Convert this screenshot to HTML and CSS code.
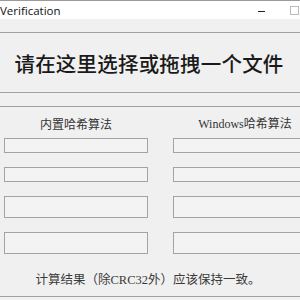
FILE: index.html
```html
<!DOCTYPE html>
<html lang="zh-CN">
<head>
    <meta charset="UTF-8">
    <meta name="viewport" content="width=device-width, initial-scale=1.0">
    <title>Hash Verification</title>
    <link rel="stylesheet" href="styles.css">
</head>
<body>

<div class="window">
    <div class="titlebar">
        <span class="title">Verification</span>
        <span class="min-btn"></span>
        <span class="max-btn"></span>
    </div>

    <div class="drop-zone">请在这里选择或拖拽一个文件</div>

    <div class="panel">
        <div class="columns">
            <div class="column">
                <div class="col-label">内置哈希算法</div>
                <div class="field"></div>
                <div class="field"></div>
                <div class="field tall"></div>
                <div class="field tall"></div>
            </div>
            <div class="column">
                <div class="col-label">Windows哈希算法</div>
                <div class="field"></div>
                <div class="field"></div>
                <div class="field tall"></div>
                <div class="field tall"></div>
            </div>
        </div>
        <p class="note">计算结果（除CRC32外）应该保持一致。</p>
    </div>
</div>

</body>
</html>
```

FILE: styles.css
```css
body {
    margin: 0;
    width: 300px;
    height: 300px;
    overflow: hidden;
    background-color: #f0f0f0;
    font-family: 'Liberation Serif', 'Noto Sans CJK SC', serif;
    color: #2a2a2a;
}

.window {
    width: 300px;
    border-top: 1px solid #9a9a9a;
}

.titlebar {
    height: 18px;
    background-color: #ffffff;
    display: flex;
    align-items: center;
    position: relative;
}

.title {
    font-family: 'Open Sans', 'Noto Sans', sans-serif;
    font-size: 11.5px;
    color: #111;
    margin-left: 0;
}

.min-btn {
    position: absolute;
    left: 258px;
    top: 10px;
    width: 7px;
    height: 1px;
    background-color: #222;
}

.max-btn {
    position: absolute;
    left: 290px;
    top: 5px;
    width: 7px;
    height: 7px;
    border: 1px solid #bbb;
}

.drop-zone {
    margin-top: 13px;
    height: 59px;
    border-top: 1px solid #a0a0a0;
    border-bottom: 1px solid #a0a0a0;
    display: flex;
    align-items: center;
    justify-content: center;
    font-family: 'Noto Sans CJK SC', sans-serif;
    font-size: 20.5px;
    font-weight: 500;
    letter-spacing: 0.2px;
    color: #1a1a1a;
    padding-right: 2px;
}

.panel {
    margin-top: 13px;
    height: 189px;
    border-top: 1px solid #a0a0a0;
    border-bottom: 1px solid #a0a0a0;
}

.columns {
    display: flex;
    gap: 25px;
    padding-left: 4px;
    width: 296px;
    overflow: hidden;
}

.column {
    flex: 0 0 144px;
    display: flex;
    flex-direction: column;
    gap: 14px;
}

.col-label {
    margin-top: 10px;
    margin-bottom: -7px;
    height: 14px;
    line-height: 14px;
    text-align: center;
    font-size: 12px;
    color: #333;
}

.column:first-child .col-label {
    font-family: 'Noto Sans CJK SC', sans-serif;
}

.field {
    height: 13px;
    border: 1px solid #a3a3a3;
    background-color: #f3f3f3;
}

.field.tall {
    height: 20px;
}

.note {
    margin: 15px 0 0 0;
    padding-right: 4px;
    text-align: center;
    font-size: 12.5px;
    color: #3a3a3a;
}
```
